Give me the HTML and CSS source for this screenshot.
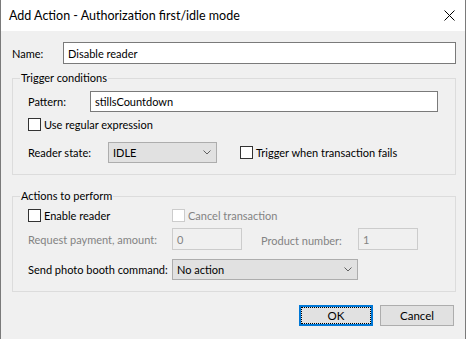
FILE: index.html
```html
<!DOCTYPE html>
<html lang="en">
<head>
    <meta charset="UTF-8">
    <meta name="viewport" content="width=device-width, initial-scale=1.0">
    <title>Add Action</title>
    <link rel="stylesheet" href="styles.css">
</head>
<body>
    <div class="window">
        <div class="titlebar">
            <span class="title">Add Action - Authorization first/idle mode</span>
            <svg class="close" width="11" height="11" viewBox="0 0 11 11">
                <path d="M0.5 0.5 L10.5 10.5 M10.5 0.5 L0.5 10.5" stroke="#000" stroke-width="1" fill="none"/>
            </svg>
        </div>
        <div class="content">
            <div class="row name-row">
                <span class="lbl name-lbl">Name:</span>
                <div class="textbox name-box">Disable reader</div>
            </div>

            <fieldset class="group">
                <legend>Trigger conditions</legend>
                <div class="group-inner">
                    <div class="row pattern-row">
                        <span class="lbl pattern-lbl">Pattern:</span>
                        <div class="textbox pattern-box">stillsCountdown</div>
                    </div>
                    <div class="row check-row regex-row">
                        <span class="check"></span>
                        <span>Use regular expression</span>
                    </div>
                    <div class="row state-row">
                        <span class="lbl state-lbl">Reader state:</span>
                        <div class="combo state-combo">
                            <span>IDLE</span>
                            <svg class="chevron" width="8" height="5" viewBox="0 0 8 5"><path d="M0.5 0.5 L4 4 L7.5 0.5" stroke="#606060" fill="none"/></svg>
                        </div>
                        <span class="check fails-check"></span>
                        <span>Trigger when transaction fails</span>
                    </div>
                </div>
            </fieldset>

            <fieldset class="group actions">
                <legend>Actions to perform</legend>
                <div class="group-inner">
                    <div class="row check-row enable-row">
                        <div class="col-first">
                            <span class="check"></span>
                            <span>Enable reader</span>
                        </div>
                        <span class="check disabled"></span>
                        <span class="muted">Cancel transaction</span>
                    </div>
                    <div class="row payment-row">
                        <span class="lbl col-first muted">Request payment, amount:</span>
                        <div class="textbox disabled amount-box">0</div>
                        <span class="lbl product-lbl muted">Product number:</span>
                        <div class="textbox disabled product-box">1</div>
                    </div>
                    <div class="row send-row">
                        <span class="lbl col-first">Send photo booth command:</span>
                        <div class="combo send-combo">
                            <span>No action</span>
                            <svg class="chevron" width="8" height="5" viewBox="0 0 8 5"><path d="M0.5 0.5 L4 4 L7.5 0.5" stroke="#606060" fill="none"/></svg>
                        </div>
                    </div>
                </div>
            </fieldset>

            <div class="buttons">
                <button class="btn default"><span class="focus">OK</span></button>
                <button class="btn">Cancel</button>
            </div>
        </div>
    </div>
</body>
</html>
```

FILE: styles.css
```css
* {
    box-sizing: border-box;
}
body {
    margin: 0;
    padding: 0;
    font-family: "Lato", "Noto Sans", sans-serif;
    font-size: 11px;
    color: #000;
    background-color: #f0f0f0;
}
.window {
    width: 466px;
    height: 339px;
    border-left: 1px solid #7a7a7a;
    border-right: 1px solid #7a7a7a;
    background-color: #f0f0f0;
    overflow: hidden;
}
.titlebar {
    height: 31px;
    background-color: #fff;
    display: flex;
    align-items: center;
    justify-content: space-between;
    padding: 0 10px 0 8px;
}
.title {
    font-size: 12.5px;
}
.close {
    display: block;
    margin-top: -1px;
}
.content {
    padding: 11px 9px 0 11px;
}
.row {
    display: flex;
    align-items: center;
    white-space: nowrap;
}
.lbl {
    flex: none;
}
.name-row {
    height: 22px;
}
.name-lbl {
    width: 51px;
}
.textbox {
    height: 22px;
    border: 1px solid #7a7a7a;
    background-color: #fff;
    padding: 0 4px;
    display: flex;
    align-items: center;
}
.name-box {
    width: 393px;
}
.group {
    margin: 6px 0 0 0;
    padding: 0;
    border: 1px solid #dcdcdc;
    min-width: 0;
}
.group legend {
    margin-left: 7px;
    padding: 0 1px;
    line-height: 16px;
}
.group-inner {
    padding: 5px 17px 11px 15px;
}
.pattern-row {
    height: 21px;
}
.pattern-lbl {
    width: 62px;
}
.pattern-box {
    width: 348px;
    height: 21px;
}
.check-row {
    height: 13px;
    margin-top: 6px;
}
.check {
    flex: none;
    width: 13px;
    height: 13px;
    border: 1px solid #333;
    background-color: #fff;
    margin-right: 3px;
}
.check.disabled {
    border-color: #cccccc;
}
.state-row {
    height: 21px;
    margin-top: 11px;
}
.state-lbl {
    width: 80px;
}
.combo {
    height: 21px;
    border: 1px solid #adadad;
    background-color: #e1e1e1;
    padding: 0 5px 0 4px;
    display: flex;
    align-items: center;
    justify-content: space-between;
}
.chevron {
    display: block;
}
.state-combo {
    width: 109px;
}
.fails-check {
    margin-left: 23px;
}
.actions {
    margin-top: 13px;
}
.col-first {
    width: 144px;
    flex: none;
    display: flex;
    align-items: center;
}
.muted {
    color: #838383;
}
.enable-row {
    margin-top: 0;
}
.payment-row {
    height: 22px;
    margin-top: 6px;
}
.textbox.disabled {
    border-color: #cccccc;
    background-color: #f0f0f0;
    color: #838383;
}
.amount-box {
    width: 70px;
}
.product-lbl {
    width: 116px;
    padding-left: 19px;
    padding-top: 3px;
}
.product-box {
    width: 60px;
}
.send-row {
    height: 21px;
    margin-top: 9px;
}
.send-combo {
    width: 186px;
}
.buttons {
    display: flex;
    justify-content: flex-end;
    gap: 7px;
    margin-top: 13px;
    padding-right: 2px;
}
.btn {
    width: 74px;
    height: 21px;
    border: 1px solid #adadad;
    background-color: #e1e1e1;
    font-family: inherit;
    font-size: 11.5px;
    color: #000;
    padding: 0;
}
.btn.default {
    border: 2px solid #0078d7;
    padding: 1px;
}
.btn .focus {
    display: flex;
    align-items: center;
    justify-content: center;
    width: 100%;
    height: 100%;
    outline: 1px dotted #000;
}
```
